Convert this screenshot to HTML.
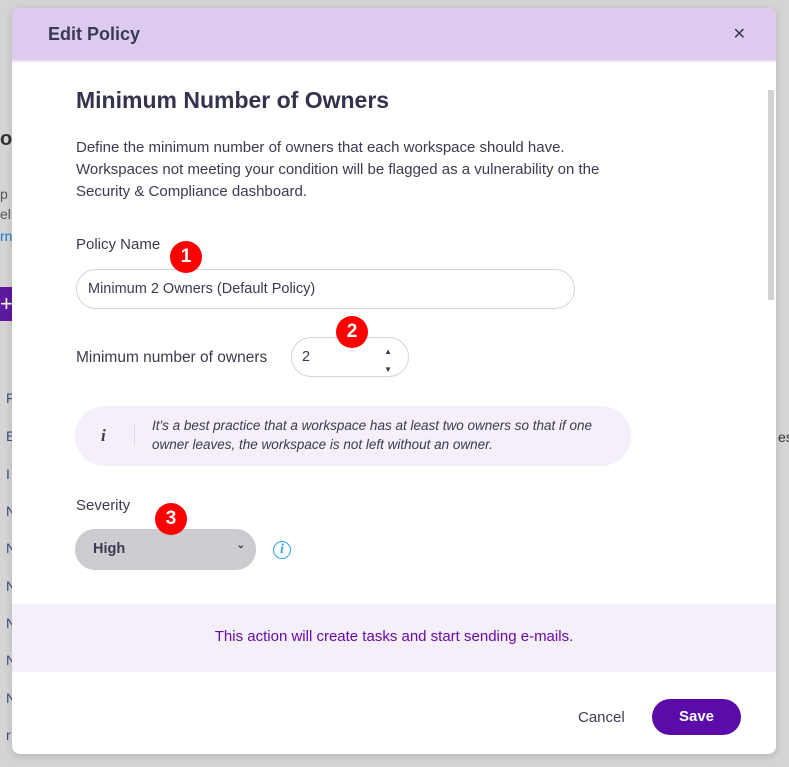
<!DOCTYPE html>
<html><head><meta charset="utf-8"><style>
*{box-sizing:border-box;margin:0;padding:0}
body{width:789px;height:767px;background:#d4d4d4;position:relative;overflow:hidden;font-family:"Liberation Sans",sans-serif;color:#3b3b4f}
.bg{position:absolute;font-size:14px;color:#3a4e7a}
.modal{position:absolute;left:12px;top:8px;width:764px;height:746px;background:#fff;border-radius:8px;overflow:hidden;box-shadow:0 2px 8px rgba(0,0,0,.15)}
.hdr{height:54px;background:#dccbee;border-bottom:2px solid #ece3f6;position:relative}
.hdr h1{position:absolute;left:36px;top:16px;font-size:18px;font-weight:bold;color:#3a3a52}
.x{position:absolute;right:30px;top:16px;font-size:16px;color:#3a3a52}
.ab{position:absolute}
.badge{position:absolute;width:32px;height:32px;border-radius:50%;background:#f00;color:#fff;font-weight:bold;font-size:19px;text-align:center;line-height:32px}
</style></head><body>
<div class="bg" style="left:0;top:128px;font-size:20px;font-weight:bold;color:#333">ol</div>
<div class="bg" style="left:0;top:186px;color:#555">p</div>
<div class="bg" style="left:0;top:206px;color:#555">el (</div>
<div class="bg" style="left:0;top:228px;color:#1a7bc8">rn</div>
<div style="position:absolute;left:0;top:287px;width:12px;height:34px;background:#5e1a9e;color:#fff;font-size:22px;line-height:34px">+</div>
<div class="bg" style="left:6px;top:390px">F</div>
<div class="bg" style="left:6px;top:428px">E</div>
<div class="bg" style="left:6px;top:466px">I</div>
<div class="bg" style="left:6px;top:503px">N</div>
<div class="bg" style="left:6px;top:540px">N</div>
<div class="bg" style="left:6px;top:578px">N</div>
<div class="bg" style="left:6px;top:615px">N</div>
<div class="bg" style="left:6px;top:652px">N</div>
<div class="bg" style="left:6px;top:690px">N</div>
<div class="bg" style="left:6px;top:727px">r</div>
<div class="bg" style="left:778px;top:429px;color:#333">es</div>
<div class="modal">
 <div class="hdr"><h1>Edit Policy</h1><div class="x">✕</div></div>
 <div style="position:absolute;right:2px;top:82px;width:6px;height:210px;background:#d2d2d2"></div>
 <div class="ab" style="left:64px;top:79px;font-size:23px;font-weight:bold;color:#33334d">Minimum Number of Owners</div>
 <div class="ab" style="left:64px;top:129px;font-size:15px;line-height:22px;white-space:nowrap;color:#3b3b4f">Define the minimum number of owners that each workspace should have.<br>Workspaces not meeting your condition will be flagged as a vulnerability on the<br>Security &amp; Compliance dashboard.</div>
 <div class="ab" style="left:64px;top:228px;font-size:15px">Policy Name</div>
 <div class="ab" style="left:64px;top:261px;width:499px;height:40px;border:1px solid #d5d5d5;border-radius:20px;padding:11px 11px;font-size:14.5px">Minimum 2 Owners (Default Policy)</div>
 <div class="ab" style="left:64px;top:341px;font-size:15.5px">Minimum number of owners</div>
 <div class="ab" style="left:279px;top:329px;width:118px;height:40px;border:1px solid #d5d5d5;border-radius:20px;padding:11px 10px;font-size:14.5px">2
  <span style="position:absolute;right:16px;top:9px;font-size:8px;line-height:9px">▲<br><br>▼</span></div>
 <div class="ab" style="left:63px;top:398px;width:556px;height:60px;background:#f4eff9;border-radius:30px">
  <div class="ab" style="left:26px;top:20px;font-family:'Liberation Serif',serif;font-style:italic;font-weight:bold;font-size:17px">i</div>
  <div class="ab" style="left:59px;top:18px;width:1px;height:22px;background:#ddd"></div>
  <div class="ab" style="left:77px;top:10px;font-style:italic;font-size:13.5px;line-height:19px;width:475px;color:#3b3b4f">It's a best practice that a workspace has at least two owners so that if one owner leaves, the workspace is not left without an owner.</div>
 </div>
 <div class="ab" style="left:64px;top:489px;font-size:15px">Severity</div>
 <div class="ab" style="left:63px;top:521px;width:181px;height:41px;background:#cbcbd0;border-radius:20px;padding:12px 18px;font-size:14.5px;font-weight:bold;color:#3b3b4f">High<span style="position:absolute;right:11px;top:11px;font-size:10px">⌄</span></div>
 <div class="ab" style="left:261px;top:533px;width:18px;height:18px;border:1.5px solid #2ea3f2;border-radius:50%;color:#2ea3f2;font-family:'Liberation Serif',serif;font-style:italic;font-weight:bold;font-size:14px;text-align:center;line-height:16px">i</div>
 <div class="ab" style="left:0;top:596px;width:764px;height:68px;background:#f4eff9;text-align:center;line-height:66px;font-size:15px;color:#6a0aa6">This action will create tasks and start sending e-mails.</div>
 <div class="ab" style="left:566px;top:701px;font-size:15px">Cancel</div>
 <div class="ab" style="left:640px;top:691px;width:89px;height:36px;background:#5b0ca8;border-radius:18px;color:#fff;font-weight:bold;font-size:15px;text-align:center;line-height:36px">Save</div>
</div>
<div class="badge" style="left:170px;top:241px">1</div>
<div class="badge" style="left:336px;top:316px">2</div>
<div class="badge" style="left:155px;top:503px">3</div>
</body></html>
